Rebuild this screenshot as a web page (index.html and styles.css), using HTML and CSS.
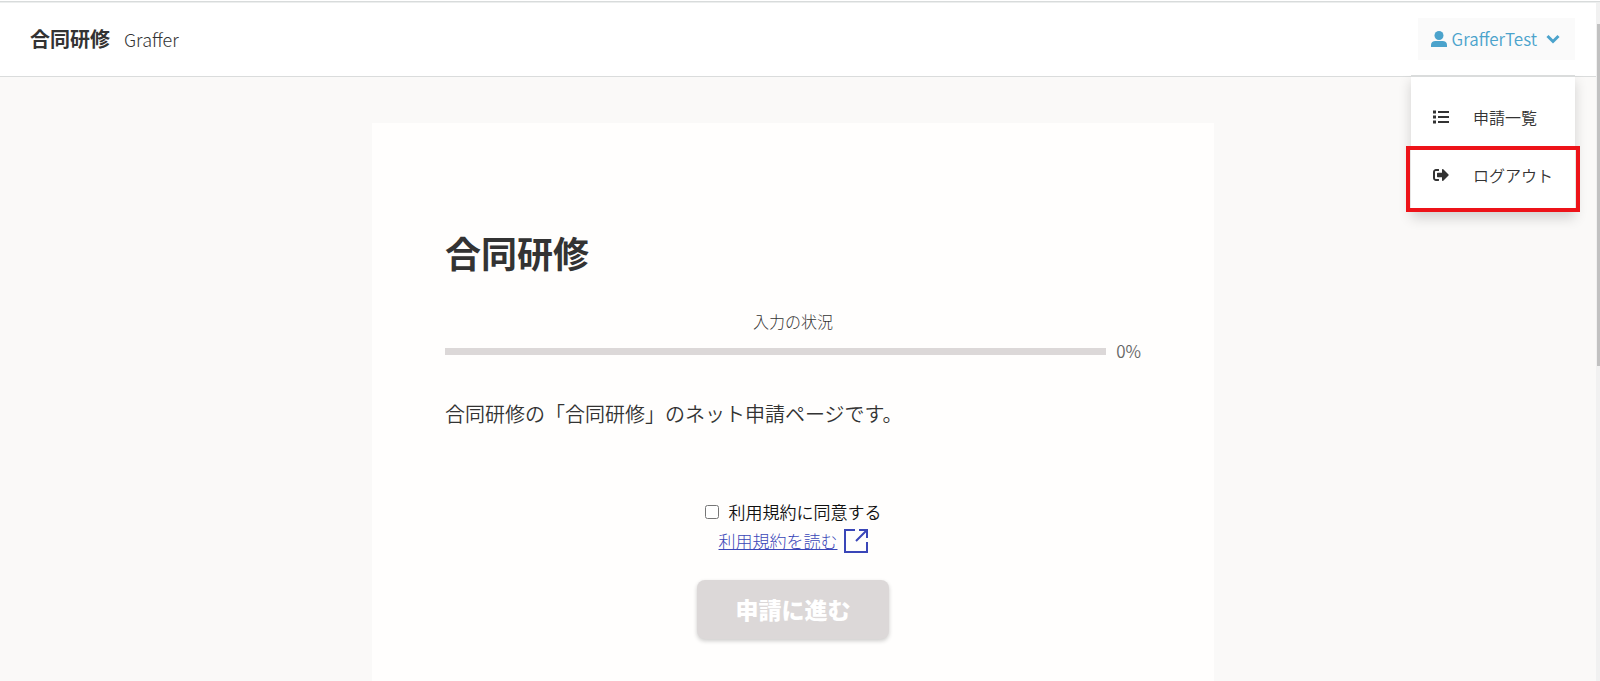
FILE: index.html
```
<!DOCTYPE html>
<html lang="ja">
<head>
<meta charset="UTF-8">
<meta name="viewport" content="width=device-width, initial-scale=1.0">
<title>合同研修 | Graffer</title>
<link rel="stylesheet" href="styles.css">
</head>
<body>
<div class="topline"></div>
<div class="window">
    <div class="page">
    <header class="header">
        <div class="brand">
        <span class="brand-name">合同研修</span>
        <span class="brand-sub">Graffer</span>
        </div>
        <div class="account">
        <button class="account-button" type="button" aria-haspopup="true" aria-expanded="true">
            <svg class="icon-user" viewBox="0 0 16 16" aria-hidden="true"><circle cx="8" cy="4.500" r="4.500"/><path d="M0 16v-2c0-2.600 1.900-4 4.400-4h7.200c2.500 0 4.400 1.400 4.400 4v2z"/></svg>
            <span>GrafferTest</span>
            <svg class="icon-chevron" viewBox="0 0 14 10" aria-hidden="true"><path d="M1.500 2l5.500 5.500L12.500 2"/></svg>
        </button>
        <nav class="menu">
            <a class="menu-item" href="#">
            <svg viewBox="0 0 16 16" aria-hidden="true"><path d="M0 1.500h3v3H0zM0 6.500h3v3H0zM0 11.500h3v3H0zM5 2h11v2H5zM5 7h11v2H5zM5 12h11v2H5z"/></svg>
            <span>申請一覧</span>
            </a>
            <a class="menu-item menu-item-marked" href="#">
            <svg viewBox="0 0 512 512" aria-hidden="true"><path d="M497 273L329 441c-15 15-41 4.500-41-17v-96H152c-13.300 0-24-10.700-24-24v-96c0-13.300 10.700-24 24-24h136V88c0-21.400 25.900-32 41-17l168 168c9.300 9.400 9.300 24.600 0 34zM192 436v-40c0-6.600-5.400-12-12-12H96c-17.700 0-32-14.300-32-32V160c0-17.700 14.300-32 32-32h84c6.600 0 12-5.400 12-12V76c0-6.600-5.400-12-12-12H96c-53 0-96 43-96 96v192c0 53 43 96 96 96h84c6.600 0 12-5.400 12-12z"/></svg>
            <span>ログアウト</span>
            </a>
        </nav>
        </div>
    </header>

    <main class="main">
        <div class="card">
        <h1>合同研修</h1>

        <div class="progress">
            <p class="progress-label" id="progress-label">入力の状況</p>
            <div class="progress-row">
            <div class="progress-bar" role="progressbar" aria-labelledby="progress-label" aria-valuenow="0" aria-valuemin="0" aria-valuemax="100"></div>
            <span class="progress-value">0%</span>
            </div>
        </div>

        <p class="lead">合同研修の「合同研修」のネット申請ページです。</p>

        <form class="agree">
            <div class="agree-check">
            <input type="checkbox" id="agree">
            <label for="agree">利用規約に同意する</label>
            </div>
            <a class="terms" href="#">
            <span>利用規約を読む</span>
            <svg viewBox="0 0 24 24" aria-hidden="true"><path d="M11 1H1v22h22V13M15 1h8v8M23 1L12 12"/></svg>
            </a>
            <button class="submit" type="submit" disabled>申請に進む</button>
        </form>
        </div>
    </main>
    </div>
    <div class="scroll-track"><div class="scroll-thumb"></div></div>
</div>
</body>
</html>
```
FILE: styles.css
```
:root {
--bg: #faf9f8;
--card: #fffefd;
--text: #333;
--line: #dadcdc;
--muted: #dcd8d8;
--accent: #4ba3cc;
--link: #3a46b8;
--mark: #ed1319;
}

* {
box-sizing: border-box;
}

body {
margin: 0;
min-height: 100vh;
display: flex;
flex-direction: column;
font-family: "Noto Sans CJK JP", sans-serif;
font-size: 16px;
font-weight: 350;
line-height: 24px;
background: var(--bg);
color: var(--text);
}

h1, p {
margin: 0;
}

.topline {
height: 3px;
background: linear-gradient(#fff 1px, #d8dbdb 1px, #d8dbdb 2px, #eceeee 2px);
}

.window {
flex: 1;
display: flex;
}

.page {
flex: 1;
display: flex;
flex-direction: column;
}

/* header */
.header {
display: flex;
justify-content: space-between;
height: 74px;
padding: 0 21px 1px 30px;
background: #fff;
border-bottom: 1px solid var(--line);
}

.brand {
display: flex;
align-items: center;
gap: 14px;
}

.brand-name {
font-size: 20px;
font-weight: bold;
}

.brand-sub {
font-size: 18px;
font-weight: 300;
}

.account {
position: relative;
display: flex;
align-items: center;
}

.account-button {
display: flex;
align-items: center;
height: 42px;
padding: 0 15px 0 13px;
border: none;
background: #fafafa;
color: var(--accent);
font: inherit;
font-size: 17px;
cursor: pointer;
}

.icon-user {
width: 16px;
height: 16px;
margin-right: 5px;
fill: currentColor;
}

.icon-chevron {
width: 14px;
height: 10px;
margin-left: 9px;
fill: none;
stroke: currentColor;
stroke-width: 3;
}

.menu {
position: absolute;
top: 100%;
right: 0;
width: 164px;
padding-top: 10px;
background: #fff;
border-top: 2px solid var(--line);
box-shadow: 0 6px 12px rgba(0, 0, 0, 0.16);
clip-path: inset(0 -20px -20px -20px);
}

.menu-item {
display: flex;
align-items: center;
gap: 24px;
height: 59px;
padding: 0 22px;
color: var(--text);
text-decoration: none;
white-space: nowrap;
}

.menu-item svg {
width: 16px;
height: 16px;
fill: currentColor;
}

.menu-item-marked {
height: 66px;
margin: 0 -5px;
padding: 0 23px 8px;
border: 4px solid var(--mark);
}

/* form card */
.main {
flex: 1;
display: flex;
justify-content: center;
padding: 46px 10px 0 0;
}

.card {
width: 842px;
padding: 102px 73px 40px;
background: var(--card);
}

h1 {
font-size: 36px;
line-height: 54px;
}

.progress {
margin-top: 30px;
}

.progress-label {
font-weight: 300;
text-align: center;
}

.progress-row {
display: flex;
align-items: center;
gap: 10px;
margin-top: 6px;
}

.progress-bar {
flex: 1;
height: 7px;
background: var(--muted);
}

.progress-value {
font-size: 17px;
color: #666;
}

.lead {
margin-top: 36px;
font-size: 20px;
line-height: 30px;
}

.agree {
display: flex;
flex-direction: column;
align-items: center;
margin-top: 68px;
font-size: 17px;
line-height: 29px;
}

.agree-check {
display: flex;
align-items: center;
gap: 10px;
color: #111;
}

.agree-check input {
width: 14px;
height: 14px;
margin: 0;
}

.terms {
display: flex;
align-items: center;
gap: 6px;
color: var(--link);
font-weight: 300;
}

.terms svg {
width: 24px;
height: 24px;
fill: none;
stroke: currentColor;
stroke-width: 2;
}

.submit {
width: 192px;
height: 59px;
margin-top: 25px;
border: none;
border-radius: 8px;
background: var(--muted);
box-shadow: 0 2px 4px rgba(0, 0, 0, 0.2);
color: #fff;
font: inherit;
font-size: 23px;
font-weight: 900;
}

/* scroll bar at the window edge */
.scroll-track {
width: 4px;
padding: 21px 0 0 1px;
background: #f1f1f1;
}

.scroll-thumb {
height: 342px;
background: #c1c1c1;
}
```
